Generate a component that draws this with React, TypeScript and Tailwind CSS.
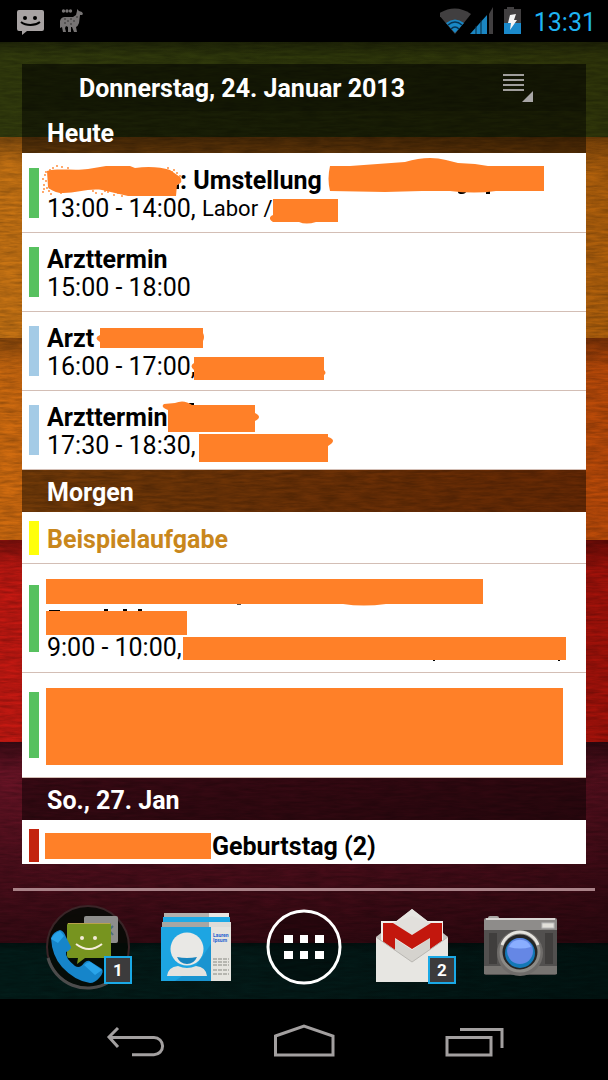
import type { ReactNode } from "react";
import clsx from "clsx";

const BANDS = [
  { size: "h-[95px]", colors: "from-[#323b0d] via-[#2e370b] to-[#2f350a]" },
  { size: "h-[201px]", colors: "from-[#c87414] via-[#c87012] to-[#b0600c]" },
  { size: "h-[202px]", colors: "from-[#d06c10] via-[#c45a0c] to-[#ba4a09]" },
  { size: "h-[202px]", colors: "from-[#c41912] via-[#b4140e] to-[#a2120a]" },
  { size: "h-[201px]", colors: "from-[#6a1426] via-[#641223] to-[#540f1d]" },
  { size: "flex-1", colors: "from-[#031c19] via-[#041a18] to-[#021412]" },
];

function Wallpaper() {
  return (
    <div className="absolute inset-0 -z-10 flex flex-col overflow-hidden" aria-hidden="true">
      {BANDS.map((band, i) => (
        <div key={i} className={clsx("bg-linear-to-r", band.size, band.colors)}>
          <div
            className={clsx(
              "h-full",
              i === 4
                ? "bg-linear-to-b from-black/45 via-transparent via-15% to-black/50"
                : "bg-linear-to-b from-black/35 via-transparent via-15% to-transparent"
            )}
          />
        </div>
      ))}
      <svg className="absolute inset-0 h-full w-full opacity-25">
        <filter id="wood">
          <feTurbulence type="fractalNoise" baseFrequency="0.05 0.35" numOctaves="4" seed="4" />
          <feColorMatrix values="0 0 0 0 0  0 0 0 0 0  0 0 0 0 0  1.6 0 0 0 -0.4" />
        </filter>
        <rect width="100%" height="100%" filter="url(#wood)" />
      </svg>
    </div>
  );
}

function StatusBar() {
  return (
    <header className="flex h-[42px] shrink-0 items-center justify-between bg-black pr-3 pl-4">
      <div className="flex items-center gap-[14px]">
        <svg width="29" height="28" viewBox="0 0 29 28" role="img" aria-label="SMS">
          <path d="M3 3h23a2 2 0 0 1 2 2v17a2 2 0 0 1-2 2H11l-5 4v-4H3a2 2 0 0 1-2-2V5a2 2 0 0 1 2-2z" fill="#a8a3a3" />
          <circle cx="9" cy="11" r="2" />
          <circle cx="19" cy="11" r="2" />
          <path d="M5 15c5 4 14 4 19 0" fill="none" stroke="#000" strokeWidth="2" />
        </svg>
        <svg width="26" height="28" viewBox="0 0 26 28" role="img" aria-label="Lama">
          <g fill="#777474">
            <circle cx="4.500" cy="4" r="1.700" />
            <circle cx="8" cy="4" r="1.700" />
            <circle cx="11.500" cy="4" r="1.700" />
            <path d="M18 2l2 2 3 1 1 2-1 1-2 0-1 8q-1 3-3 4l1 5h-3l-2-5h-1v5H9v-5l-2-1-1 2 1 4H4l-1-5-2 1v-7q1-4 5-4h8l3-2 1-4z" />
          </g>
          <g fill="#2f2d2d">
            <circle cx="6" cy="12" r="0.800" />
            <circle cx="9" cy="14" r="0.800" />
            <circle cx="12" cy="12" r="0.800" />
            <circle cx="15" cy="14" r="0.800" />
            <circle cx="6" cy="16" r="0.800" />
            <circle cx="12" cy="17" r="0.800" />
            <circle cx="18" cy="10" r="0.800" />
          </g>
        </svg>
      </div>
      <div className="flex items-center">
        <svg width="94" height="30" viewBox="0 0 94 30" role="img" aria-label="WLAN, Signal, Akku">
          <path d="M-2 8Q15-3 31 8L15 28z" fill="#413f40" />
          <path d="M6 17q9-7 18 0l-9 10z" fill="#1988c6" />
          <path d="M8 19q7-6 14 0M11 23q4-4 8 0" fill="none" stroke="#073555" strokeWidth="1.500" />
          <path d="M30 28L47 9v19z" fill="#1b86c2" />
          <path d="M36 20v8M41 14v14" stroke="#06283f" strokeWidth="1" />
          <path d="M49 8l4-7v27h-4z" fill="#413f40" />
          <path d="M67 1h7v2h7v25H64V3h3z" fill="#413f40" />
          <path d="M64 17h17v11H64z" fill="#1b8acb" />
          <path d="M70 9l6-1-2 6h3l-7 10 1-7h-3z" fill="#f4f4f4" />
        </svg>
        <time className="pt-1 text-[25px] leading-7 text-[#1fb4f2]">13:31</time>
      </div>
    </header>
  );
}

interface MarkerProps {
  width: number;
  height?: number;
  x?: number;
  d: string;
  children?: ReactNode;
}

// Paths use the coordinates of a text line that is 28px high.
function Marker({ width, height = 28, x = 0, d, children }: MarkerProps) {
  return (
    <svg width={width} height={height} className="shrink-0 overflow-visible" aria-hidden="true">
      <g transform={`translate(${x} 0)`}>
        {children}
        <path d={d} fill="#ff8028" />
      </g>
    </svg>
  );
}

function SectionTitle({ children }: { children: ReactNode }) {
  return (
    <h2 className="flex h-[42px] shrink-0 items-center bg-black/45 pt-1 pl-[25px] text-[25px] leading-7 font-bold text-white">
      {children}
    </h2>
  );
}

interface EventRowProps {
  size?: string;
  bar: string;
  children: ReactNode;
}

function EventRow({ size = "h-[79px]", bar, children }: EventRowProps) {
  return (
    <li className={clsx("flex shrink-0 items-center gap-2 border-b border-[#d3beb5] bg-white pl-[7px]", size)}>
      <span className={clsx("w-[10px] shrink-0", bar)} />
      <div className="min-w-0 flex-1 pt-1 text-black">{children}</div>
    </li>
  );
}

function Title({ children, className }: { children: ReactNode; className?: string }) {
  return <div className={clsx("flex h-7 text-[25px] leading-7 font-bold whitespace-pre", className)}>{children}</div>;
}

function Time({ children }: { children: ReactNode }) {
  return <div className="flex h-7 text-[25px] leading-7 whitespace-pre">{children}</div>;
}

const SPECKLES = [
  [-3, 8], [-5, 12], [-2, 14], [-4, 18], [-1, 21], [1, 24], [-4, 22], [5, 1], [9, -1], [14, 0], [2, 3],
  [20, 1], [3, 27], [13, 26], [48, 26], [54, 27], [60, 25], [66, 28], [74, 29], [57, 24], [70, 26],
  [120, 1], [126, 3], [129, 6], [132, 9], [124, 5], [-2, 5], [-5, 25], [45, 24],
];

function Agenda() {
  return (
    <section className="mx-[22px] mt-[22px] flex min-h-0 flex-1 flex-col overflow-hidden">
      <div className="flex h-[47px] shrink-0 items-center justify-between bg-black/55 pr-[51px] pl-[57px]">
        <h1 className="pt-[2px] text-[25px] leading-7 font-bold text-white">Donnerstag, 24. Januar 2013</h1>
        <button type="button" aria-label="Menü">
          <svg width="32" height="32" viewBox="0 0 32 32">
            <path d="M0 3h21M0 8h21M0 13h21M0 18h21" stroke="#a09e9c" strokeWidth="2" />
            <path d="M30 19v11H19z" fill="#a8a6a6" />
          </svg>
        </button>
      </div>

      <SectionTitle>Heute</SectionTitle>
      <ul>
        <EventRow size="h-20" bar="h-[50px] bg-[#57c15f]">
          <Title>
            <Marker
              width={133}
              x={1}
              d="M-1 4C8 1 28 4 40 2L58-1H82L87 1C100-1 113 0 122 3L132 10Q136 15 129 18L128 29H80L54 23C40 21 26 27 12 26Q3 24 0 20Z"
            >
              <path d="M0 21l6-3v4zM126 19l5-2v5h-4z" fill="#000" />
              {SPECKLES.map(([x, y]) => (
                <circle key={`${x},${y}`} cx={x} cy={y} r="0.900" fill="#ff8028" />
              ))}
            </Marker>
            <span>: Umstellung </span>
            <Marker
              width={214}
              x={2}
              d="M0-1H20L75-5Q98-12 116-7L128-4 145-3 158-1H214V24H166Q145 27 120 24H92L55 25 0 24Q-3 12 0-1Z"
            >
              <path d="M128 23h9q-1 4-5 4t-4-2zM156 23h4v4h-4z" fill="#000" />
              <path d="M87-1q12-4 22 0z" fill="#fff" />
            </Marker>
          </Title>
          <Time>
            <span>13:00 - 14:00, </span>
            <span className="text-[22px]">Labor /</span>
            <Marker width={68} x={-3} d="M3 4H68V27H46Q36 30 29 27H3Q-2 24 1 21L3 20Z" />
          </Time>
        </EventRow>
        <EventRow bar="h-[50px] bg-[#57c15f]">
          <Title>Arzttermin</Title>
          <Time>15:00 - 18:00</Time>
        </EventRow>
        <EventRow bar="h-[50px] bg-[#a4cbe6]">
          <Title>
            <span>Arzt</span>
            <Marker width={110} d="M6 3H109V8Q111 12 109 16V23H6V17Q-1 13 6 10Z" />
          </Title>
          <Time>
            <span>16:00 - 17:00,</span>
            <Marker width={132} x={-2} d="M0 4H130V17Q133 20 130 22V27H0V17Q-5 13 0 10Z" />
          </Time>
        </EventRow>
        <EventRow bar="h-[50px] bg-[#a4cbe6]">
          <Title>
            <span>Arzttermin</span>
            <Marker width={90} d="M0 28V6Q-8 3-4 0L7-1Q16-5 24 1H87V9Q95 13 87 17V28Z">
              <path d="M21-1h5v3h-5z" fill="#000" />
            </Marker>
          </Title>
          <Time>
            <span>17:30 - 18:30, </span>
            <Marker width={136} x={-5} d="M2 2H131V5Q141 8 131 14V30H2Z" />
          </Time>
        </EventRow>
      </ul>

      <SectionTitle>Morgen</SectionTitle>
      <ul>
        <EventRow size="h-[52px]" bar="h-[34px] bg-[#ffff0a]">
          <Title className="text-[#c9871c]">Beispielaufgabe</Title>
        </EventRow>
        <EventRow size="h-[109px]" bar="h-[67px] bg-[#57c15f]">
          <Title>
            <Marker width={436} x={1} d="M-2 1H435V26H338Q315 29 295 26H-2Z">
              <path d="M189 26h4v1h-4z" fill="#555" />
            </Marker>
          </Title>
          <Title>
            <Marker width={141} x={1} d="M-2 5H139V29H-2Z">
              <path d="M1 4h11v2H1zM56 3h4v3h-4zM75 3h4v3h-4zM90 3h4v3h-4z" fill="#000" />
            </Marker>
          </Title>
          <Time>
            <span>9:00 - 10:00,</span>
            <Marker width={384} d="M1 3H384V26H1Z">
              <path d="M251 26h2v1h-2zM376 26h2v1h-2z" fill="#000" />
            </Marker>
          </Time>
        </EventRow>
        <EventRow size="h-[105px]" bar="h-[66px] bg-[#57c15f]">
          <Marker width={517} height={77} x={1} d="M-2-1H515V76H-2Z" />
        </EventRow>
      </ul>

      <SectionTitle>So., 27. Jan</SectionTitle>
      <ul>
        <EventRow size="h-[51px]" bar="h-[33px] bg-[#c3240f]">
          <Title>
            <Marker width={165} x={1} d="M-3 0H163V26H-3Z" />
            <span>Geburtstag (2)</span>
          </Title>
        </EventRow>
      </ul>
    </section>
  );
}

function Badge({ children }: { children: ReactNode }) {
  return (
    <span className="absolute top-[65px] left-[70px] flex size-7 items-center justify-center border-2 border-[#1aa9e6] bg-[#3c3b3c] text-[17px] leading-5 font-bold text-white">
      {children}
    </span>
  );
}

function DockButton({ label, badge, children }: { label: string; badge?: string; children: ReactNode }) {
  return (
    <button type="button" aria-label={label} className="relative w-[108px]">
      <svg width="108" height="108" viewBox="0 0 108 108">
        {children}
      </svg>
      {badge && <Badge>{badge}</Badge>}
    </button>
  );
}

function Dock() {
  return (
    <nav className="flex shrink-0 justify-center">
      <DockButton label="Telefon und SMS" badge="1">
        <circle cx="54" cy="56" r="41" fill="#050a06" fillOpacity="0.850" stroke="#3a2427" strokeWidth="2" />
        <path d="M14 67A41 41 0 0 0 75 91" fill="none" stroke="#4c4c4c" strokeWidth="3" />
        <rect x="50" y="25" width="34" height="27" rx="2" fill="#8e8e8c" />
        <path d="M75 39l4-4M75 39l4 5" stroke="#4b6f80" strokeWidth="2" />
        <path d="M35 32h40q2 0 2 2v31q0 2-2 2H51l-8 6 1-6h-9q-2 0-2-2V34q0-2 2-2z" fill="#77941f" />
        <path d="M34 32.500h42" stroke="#b8a24d" />
        <circle cx="48" cy="47" r="2" fill="#f3ead8" />
        <circle cx="61" cy="47" r="2" fill="#f3ead8" />
        <path d="M42 53q13 10 26 0" fill="none" stroke="#f7eedd" strokeWidth="2" />
        <path d="M17 47q2-6 9-8 4 1 6 7l5 10q0 3-5 5-1 6 9 14 5 3 9-3 4-4 7-1l11 7q2 3-2 8-5 6-10 6-15-2-28-16Q18 65 17 47z" fill="#1685ca" />
        <path d="M17 48q3-6 9-8l4 5-6 7zM50 74q5-5 8-2l10 7-7 5z" fill="#29a4ea" />
      </DockButton>

      <DockButton label="Kontakte">
        <path d="M22 22h65v5H22z" fill="#b3b1ae" />
        <path d="M67 22h20v4H67z" fill="#e8e7e3" />
        <path d="M21 26h67v5H21z" fill="#1eaae6" />
        <path d="M20 31h69v6H20z" fill="#a7a6a3" />
        <path d="M67 31h22v6H67z" fill="#dddcd8" />
        <path d="M19 36h50v54H19z" fill="#1da5e2" />
        <path d="M69 36h20v54H69z" fill="#e5e4df" />
        <path d="M54 75l15-22v37H33z" fill="#1783bd" opacity="0.500" />
        <circle cx="45" cy="58" r="16.500" fill="#e9e8e5" />
        <path d="M35 66q10 2 20 0-3 7-10 7t-10-7z" fill="#1784bf" />
        <path d="M25 85q1-9 11-10 9 4 18 0 10 1 11 10z" fill="#e4e3df" />
        <text x="71" y="46" fontSize="5" fontWeight="700" fill="#2762d0">Lauren</text>
        <text x="71" y="51" fontSize="5" fontWeight="700" fill="#2762d0">Ipsum</text>
        <path d="M71 68h16M71 71h16M71 74h16M71 79h16M71 83h16" stroke="#888782" strokeWidth="1.200" strokeDasharray="4 1" />
      </DockButton>

      <DockButton label="Apps">
        <circle cx="54" cy="56" r="36" fill="#000" fillOpacity="0.250" stroke="#fff" strokeWidth="3" />
        <path d="M34 44h9v8h-9zM50 44h8v8h-8zM65 44h9v8h-9zM34 60h9v8h-9zM50 60h8v8h-8zM65 60h9v8h-9z" fill="#fff" />
      </DockButton>

      <DockButton label="Gmail" badge="2">
        <path d="M18 46l5-4 31-24 31 24 5 4v10H18z" fill="#c5c3bf" />
        <path d="M54 18l18 14H36z" fill="#e6e5e1" />
        <path d="M23 30h62v34H23z" fill="#f0efeb" />
        <path d="M35 32l19 12 19-12-19-7z" fill="#e2e0dc" />
        <path d="M36 47l18 12 18-12v14L54 72 36 61z" fill="#d5d3ce" />
        <path d="M25 32h10l19 12 19-12h11v23l-12 7V47L54 58 37 47v15l-12-7z" fill="#c3170d" />
        <path d="M18 46l36 25 36-25v45H18z" fill="#e7e6e2" />
        <path d="M18 46l36 25 36-25" fill="none" stroke="#b9b7b2" />
      </DockButton>

      <DockButton label="Kamera">
        <rect x="22" y="25" width="11" height="5" rx="2" fill="#aaa8a5" />
        <rect x="18" y="28" width="73" height="56" rx="2" fill="#52504f" />
        <path d="M20 27h69q2 0 2 2v10H18V29q0-2 2-2z" fill="#8e8c8a" />
        <path d="M20 28h69" stroke="#d8d6d3" strokeWidth="2" />
        <path d="M18 75h73v8H18z" fill="#777471" />
        <rect x="76" y="32" width="12" height="5" fill="#e2e0da" stroke="#bbb" />
        <path d="M23 42h8v31h-8zM79 42h8v31h-8z" fill="#403e3d" />
        <circle cx="54" cy="62" r="23" fill="#6f6c6a" />
        <circle cx="54" cy="61" r="19" fill="#252525" stroke="#8c8a86" strokeWidth="3" />
        <path d="M36 54a19 19 0 0 1 36 0" fill="none" stroke="#e5e3de" strokeWidth="3" />
        <circle cx="54" cy="62" r="15" fill="#1478b6" />
        <circle cx="54" cy="60" r="13" fill="#6587e5" />
        <path d="M43 56a12 12 0 0 1 22 0q-11 3-22 0z" fill="#8aaeff" />
      </DockButton>
    </nav>
  );
}

function NavBar() {
  const icons = [
    { label: "Zurück", d: "M15 8L6 17l9 10M6 17.500h45a8.600 8.600 0 0 1 0 17.200H29" },
    { label: "Start", d: "M3.500 16L32 6l29 10v19H3.500z" },
    { label: "Letzte Apps", d: "M6 17.500h44V35H6zM19 9.500h42V28" },
  ];
  return (
    <nav className="grid h-[81px] shrink-0 grid-cols-3 bg-black px-[50px]">
      {icons.map(({ label, d }) => (
        <button key={label} type="button" aria-label={label} className="flex items-center justify-center pt-px">
          <svg width="64" height="40" viewBox="0 0 64 40" fill="none" stroke="#a3a0a0" strokeWidth="3">
            <path d={d} />
          </svg>
        </button>
      ))}
    </nav>
  );
}

export default function App() {
  return (
    <div className="flex h-screen flex-col overflow-hidden bg-black font-[Roboto,sans-serif]">
      <StatusBar />
      <main className="relative isolate flex min-h-0 flex-1 flex-col">
        <Wallpaper />
        <Agenda />
        <hr className="mx-[13px] mt-6 h-[3px] shrink-0 border-0 bg-[#a98288]" />
        <Dock />
      </main>
      <NavBar />
    </div>
  );
}
